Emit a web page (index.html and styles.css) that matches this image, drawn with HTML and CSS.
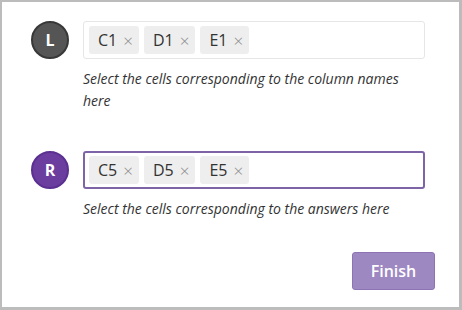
FILE: index.html
```html
<!DOCTYPE html>
<html>
<head>
<meta charset="utf-8">
<link rel="stylesheet" href="styles.css">
</head>
<body>
<div class="frame">
  <div class="row">
    <div class="avatar avatar-l">L</div>
    <div class="box">
      <span class="chip">C1<span class="x">×</span></span>
      <span class="chip">D1<span class="x">×</span></span>
      <span class="chip">E1<span class="x">×</span></span>
    </div>
  </div>
  <p class="help">Select the cells corresponding to the column names<br>here</p>

  <div class="row row-2">
    <div class="avatar avatar-r">R</div>
    <div class="box box-active">
      <span class="chip">C5<span class="x">×</span></span>
      <span class="chip">D5<span class="x">×</span></span>
      <span class="chip">E5<span class="x">×</span></span>
    </div>
  </div>
  <p class="help">Select the cells corresponding to the answers here</p>

  <div class="actions">
    <button class="finish">Finish</button>
  </div>
</div>
</body>
</html>
```
FILE: styles.css
```css
html, body {
  margin: 0;
  padding: 0;
  background: #ffffff;
}
.frame {
  width: 462px;
  height: 310px;
  box-sizing: border-box;
  border-style: solid;
  border-color: #bcbcbc;
  border-width: 2px 3px 3px 2px;
  padding: 19px 0 0 29px;
  font-family: "Open Sans", "Noto Sans", sans-serif;
  color: #333333;
}
.row {
  display: flex;
  align-items: center;
  gap: 14px;
}
.row-2 {
  margin-top: 39px;
}
.avatar {
  width: 38px;
  height: 38px;
  box-sizing: border-box;
  border-radius: 50%;
  display: flex;
  align-items: center;
  justify-content: center;
  color: #ffffff;
  font-weight: 700;
  font-size: 16px;
  flex: none;
}
.avatar-l {
  background: #555555;
  border: 2px solid #383838;
}
.avatar-r {
  background: #6a3d9e;
  border: 2px solid #5b3090;
}
.box {
  width: 342px;
  height: 38px;
  box-sizing: border-box;
  border: 1px solid #e6e6e6;
  border-radius: 3px;
  display: flex;
  align-items: center;
  gap: 5px;
  padding: 0 5px;
}
.box-active {
  border: 2px solid #7d64a6;
  padding: 0 4px;
}
.chip {
  display: inline-flex;
  align-items: center;
  height: 28px;
  box-sizing: border-box;
  padding: 0 6px 0 9px;
  background: #eeeeee;
  border-radius: 3px;
  font-size: 16px;
  color: #333333;
}
.x {
  margin-left: 6px;
  color: #8a8a8a;
  font-size: 17px;
  font-weight: 300;
}
.help {
  margin: 9px 0 0 52px;
  font-size: 14px;
  line-height: 22px;
  font-style: italic;
  color: #333333;
  letter-spacing: 0px;
}
.actions {
  display: flex;
  justify-content: flex-end;
  margin-top: 32px;
  padding-right: 24px;
}
.finish {
  width: 83px;
  height: 38px;
  box-sizing: border-box;
  background: #9e88c2;
  border: 1px solid #8c74b4;
  border-radius: 3px;
  color: #ffffff;
  font-family: "Open Sans", "Noto Sans", sans-serif;
  font-weight: 600;
  font-size: 16px;
  padding: 0;
}
```
